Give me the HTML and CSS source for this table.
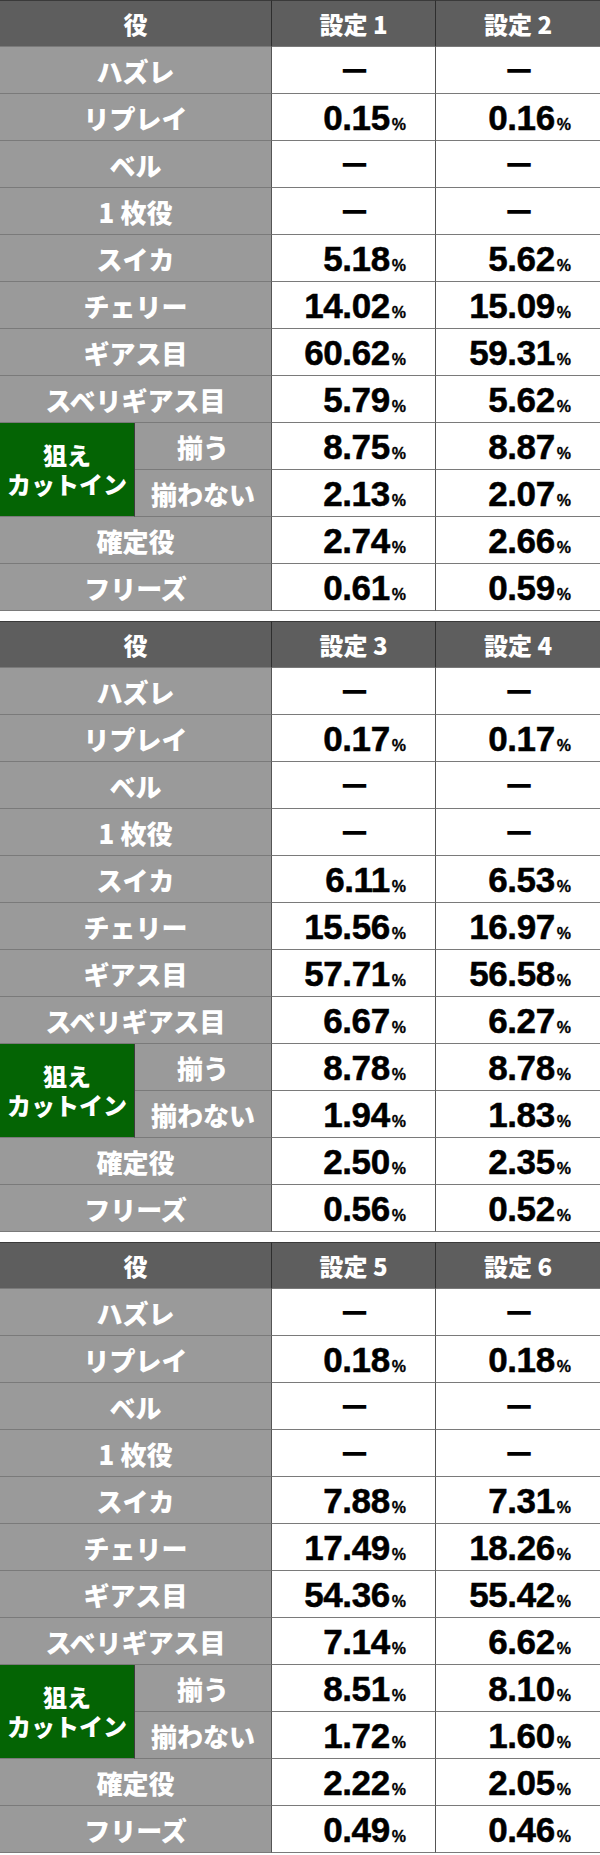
FILE: index.html
```html
<!DOCTYPE html>
<html lang="ja">
<head>
<meta charset="utf-8">
<title>小役確率</title>
<link rel="stylesheet" href="styles.css">
</head>
<body>
<main class="page">
  <section class="tbl">
    <div class="hd lbl2">役</div><div class="hd c">設定 1</div><div class="hd c">設定 2</div>
    <div class="lb lbl2">ハズレ</div><div class="v"><span class="dash">—</span></div><div class="v"><span class="dash">—</span></div>
    <div class="lb lbl2">リプレイ</div><div class="v num"><span>0.15<small>%</small></span></div><div class="v num"><span>0.16<small>%</small></span></div>
    <div class="lb lbl2">ベル</div><div class="v"><span class="dash">—</span></div><div class="v"><span class="dash">—</span></div>
    <div class="lb lbl2">1 枚役</div><div class="v"><span class="dash">—</span></div><div class="v"><span class="dash">—</span></div>
    <div class="lb lbl2">スイカ</div><div class="v num"><span>5.18<small>%</small></span></div><div class="v num"><span>5.62<small>%</small></span></div>
    <div class="lb lbl2">チェリー</div><div class="v num"><span>14.02<small>%</small></span></div><div class="v num"><span>15.09<small>%</small></span></div>
    <div class="lb lbl2">ギアス目</div><div class="v num"><span>60.62<small>%</small></span></div><div class="v num"><span>59.31<small>%</small></span></div>
    <div class="lb lbl2">スベリギアス目</div><div class="v num"><span>5.79<small>%</small></span></div><div class="v num"><span>5.62<small>%</small></span></div>
    <div class="grn"><span>狙え</span><span>カットイン</span></div><div class="lb">揃う</div><div class="v num"><span>8.75<small>%</small></span></div><div class="v num"><span>8.87<small>%</small></span></div>
    <div class="lb">揃わない</div><div class="v num"><span>2.13<small>%</small></span></div><div class="v num"><span>2.07<small>%</small></span></div>
    <div class="lb lbl2">確定役</div><div class="v num"><span>2.74<small>%</small></span></div><div class="v num"><span>2.66<small>%</small></span></div>
    <div class="lb lbl2">フリーズ</div><div class="v num"><span>0.61<small>%</small></span></div><div class="v num"><span>0.59<small>%</small></span></div>
  </section>
  <section class="tbl">
    <div class="hd lbl2">役</div><div class="hd c">設定 3</div><div class="hd c">設定 4</div>
    <div class="lb lbl2">ハズレ</div><div class="v"><span class="dash">—</span></div><div class="v"><span class="dash">—</span></div>
    <div class="lb lbl2">リプレイ</div><div class="v num"><span>0.17<small>%</small></span></div><div class="v num"><span>0.17<small>%</small></span></div>
    <div class="lb lbl2">ベル</div><div class="v"><span class="dash">—</span></div><div class="v"><span class="dash">—</span></div>
    <div class="lb lbl2">1 枚役</div><div class="v"><span class="dash">—</span></div><div class="v"><span class="dash">—</span></div>
    <div class="lb lbl2">スイカ</div><div class="v num"><span>6.11<small>%</small></span></div><div class="v num"><span>6.53<small>%</small></span></div>
    <div class="lb lbl2">チェリー</div><div class="v num"><span>15.56<small>%</small></span></div><div class="v num"><span>16.97<small>%</small></span></div>
    <div class="lb lbl2">ギアス目</div><div class="v num"><span>57.71<small>%</small></span></div><div class="v num"><span>56.58<small>%</small></span></div>
    <div class="lb lbl2">スベリギアス目</div><div class="v num"><span>6.67<small>%</small></span></div><div class="v num"><span>6.27<small>%</small></span></div>
    <div class="grn"><span>狙え</span><span>カットイン</span></div><div class="lb">揃う</div><div class="v num"><span>8.78<small>%</small></span></div><div class="v num"><span>8.78<small>%</small></span></div>
    <div class="lb">揃わない</div><div class="v num"><span>1.94<small>%</small></span></div><div class="v num"><span>1.83<small>%</small></span></div>
    <div class="lb lbl2">確定役</div><div class="v num"><span>2.50<small>%</small></span></div><div class="v num"><span>2.35<small>%</small></span></div>
    <div class="lb lbl2">フリーズ</div><div class="v num"><span>0.56<small>%</small></span></div><div class="v num"><span>0.52<small>%</small></span></div>
  </section>
  <section class="tbl">
    <div class="hd lbl2">役</div><div class="hd c">設定 5</div><div class="hd c">設定 6</div>
    <div class="lb lbl2">ハズレ</div><div class="v"><span class="dash">—</span></div><div class="v"><span class="dash">—</span></div>
    <div class="lb lbl2">リプレイ</div><div class="v num"><span>0.18<small>%</small></span></div><div class="v num"><span>0.18<small>%</small></span></div>
    <div class="lb lbl2">ベル</div><div class="v"><span class="dash">—</span></div><div class="v"><span class="dash">—</span></div>
    <div class="lb lbl2">1 枚役</div><div class="v"><span class="dash">—</span></div><div class="v"><span class="dash">—</span></div>
    <div class="lb lbl2">スイカ</div><div class="v num"><span>7.88<small>%</small></span></div><div class="v num"><span>7.31<small>%</small></span></div>
    <div class="lb lbl2">チェリー</div><div class="v num"><span>17.49<small>%</small></span></div><div class="v num"><span>18.26<small>%</small></span></div>
    <div class="lb lbl2">ギアス目</div><div class="v num"><span>54.36<small>%</small></span></div><div class="v num"><span>55.42<small>%</small></span></div>
    <div class="lb lbl2">スベリギアス目</div><div class="v num"><span>7.14<small>%</small></span></div><div class="v num"><span>6.62<small>%</small></span></div>
    <div class="grn"><span>狙え</span><span>カットイン</span></div><div class="lb">揃う</div><div class="v num"><span>8.51<small>%</small></span></div><div class="v num"><span>8.10<small>%</small></span></div>
    <div class="lb">揃わない</div><div class="v num"><span>1.72<small>%</small></span></div><div class="v num"><span>1.60<small>%</small></span></div>
    <div class="lb lbl2">確定役</div><div class="v num"><span>2.22<small>%</small></span></div><div class="v num"><span>2.05<small>%</small></span></div>
    <div class="lb lbl2">フリーズ</div><div class="v num"><span>0.49<small>%</small></span></div><div class="v num"><span>0.46<small>%</small></span></div>
  </section>
</main>
</body>
</html>
```
FILE: styles.css
```css
html, body {
  margin: 0;
  padding: 0;
  background: #ffffff;
}
.page {
  width: 600px;
  display: flex;
  flex-direction: column;
  gap: 10px;
}
.tbl {
  display: grid;
  grid-template-columns: 135px 136px 164px 165px;
  grid-auto-rows: 47px;
  font-family: "Noto Sans CJK JP", "Noto Sans", sans-serif;
}
.tbl > div {
  box-sizing: border-box;
  display: flex;
  align-items: center;
  justify-content: center;
  border-bottom: 1px solid #7a7a7a;
}
.lbl2 {
  grid-column: span 2;
}
.hd {
  background: #5e5e5e;
  color: #ffffff;
  font-weight: 900;
  font-size: 24px;
  border-top: 1px solid #3a3a3a;
  border-bottom-color: #333333;
}
.hd.c {
  border-left: 1px solid #2e2e2e;
}
.lb {
  background: #9a9a9a;
  color: #ffffff;
  font-weight: 900;
  font-size: 26px;
  border-bottom-color: #5a5a5a;
}
.grn {
  grid-row: span 2;
  flex-direction: column;
  background: #046404;
  color: #ffffff;
  font-weight: 900;
  font-size: 24px;
  border-bottom-color: #3c3c3c;
  border-right: 1px solid #3c3c3c;
  padding-bottom: 2px;
}
.grn span {
  display: block;
  height: 29px;
  line-height: 29px;
}
.v {
  background: #ffffff;
  color: #000000;
  border-left: 1px solid #555555;
  border-bottom-color: #9a9a9a;
}
.num {
  justify-content: flex-end !important;
  padding-right: 29px;
  padding-top: 1px;
  font-family: "Liberation Sans", Arial, sans-serif;
  font-weight: 700;
  font-size: 35px;
  letter-spacing: -0.4px;
  -webkit-text-stroke: 0.5px #000000;
}
.num span {
  line-height: 1;
}
.num small {
  font-size: 16px;
  letter-spacing: 0;
  margin-left: 2px;
  -webkit-text-stroke: 0.3px #000000;
}
.dash {
  font-family: "Liberation Sans", Arial, sans-serif;
  font-weight: 700;
  font-size: 22px;
  line-height: 1;
  -webkit-text-stroke: 1.4px #000000;
  margin-left: 2px;
}
```
